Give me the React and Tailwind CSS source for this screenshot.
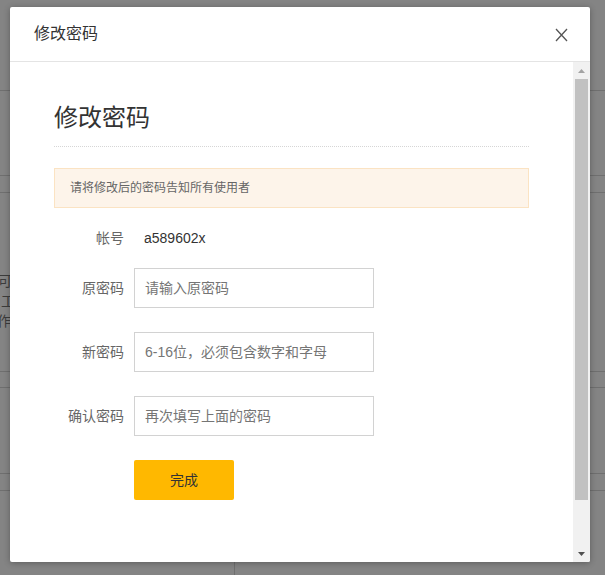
import React from 'react';

const FONT = { fontFamily: '"Liberation Sans", "Noto Sans CJK SC", sans-serif' };

function Field({ label, placeholder }) {
  return (
    <div className="flex items-center h-[40px]">
      <label className="w-[70px] text-right text-[14px] text-[#666]">{label}</label>
      <input
        type="password"
        placeholder={placeholder}
        className="ml-[10px] w-[240px] h-[40px] border border-[#d2d2d2] bg-white px-[10px] text-[14px] text-[#333] outline-none placeholder:text-[#757575]"
      />
    </div>
  );
}

function Scrollbar() {
  return (
    <div className="w-[17px] bg-[#f1f1f1] flex flex-col">
      <div className="h-[17px] flex items-center justify-center">
        <svg width="7" height="4" viewBox="0 0 7 4"><path d="M3.5 0 L7 4 L0 4 Z" fill="#a3a3a3" /></svg>
      </div>
      <div className="flex-1 px-[2px] flex flex-col">
        <div className="h-[421px] bg-[#c1c1c1]" />
      </div>
      <div className="h-[17px] flex items-center justify-center">
        <svg width="7" height="4" viewBox="0 0 7 4"><path d="M0 0 L7 0 L3.5 4 Z" fill="#505050" /></svg>
      </div>
    </div>
  );
}

export default function App() {
  return (
    <div className="relative w-[605px] h-[575px] overflow-hidden bg-[#848484]" style={FONT}>
      {/* page behind the overlay */}
      <div className="flex flex-col w-full">
        <div className="h-[91px] border-b border-[#6f6f6f]" />
        <div className="h-[85px] border-b border-[#6f6f6f]" />
        <div className="h-[17px] border-b border-[#6f6f6f]" />
        <div className="h-[179px] border-b border-[#6f6f6f] flex flex-col pt-[78px] text-[14px] leading-[20px] text-[#3c3c3c]">
          <span className="-ml-[2px]">可</span>
          <span className="ml-[1px]">工</span>
          <span className="-ml-[3px]">作</span>
        </div>
        <div className="h-[16px] border-b border-[#6f6f6f]" />
        <div className="h-[86px] border-b border-[#6f6f6f]" />
        <div className="h-[17px] border-b border-[#6f6f6f]" />
        <div className="h-[84px] flex">
          <div className="w-[235px] border-r border-[#6f6f6f]" />
        </div>
      </div>

      {/* dialog */}
      <div className="absolute left-[10px] top-[7px] w-[580px] h-[555px] bg-white rounded-[2px] shadow-[0_1px_6px_rgba(0,0,0,0.3)] flex flex-col overflow-hidden">
        <div className="h-[55px] shrink-0 border-b border-[#e4e4e4] flex items-center justify-between pl-[24px] pr-[22px]">
          <span className="text-[16px] text-[#333]">修改密码</span>
          <svg width="13" height="14" viewBox="0 0 13 14" className="mt-[1px]">
            <path d="M1 1 L12 13 M12 1 L1 13" stroke="#555" strokeWidth="1.3" fill="none" />
          </svg>
        </div>
        <div className="flex flex-1 min-h-0">
          <div className="flex-1 pl-[44px] pr-[44px] pt-[40px]">
            <h2 className="text-[24px] leading-[32px] text-[#333] pb-[12px] border-b border-dotted border-[#d6d6d6]">修改密码</h2>
            <div className="mt-[21px] h-[40px] border border-[#fbe3c3] bg-[#fdf4ea] flex items-center pl-[15px] text-[12px] text-[#666]">
              请将修改后的密码告知所有使用者
            </div>
            <div className="mt-[10px] flex items-center h-[40px]">
              <span className="w-[70px] text-right text-[14px] text-[#666]">帐号</span>
              <span className="ml-[20px] text-[14px] text-[#333]">a589602x</span>
            </div>
            <div className="mt-[10px] flex flex-col gap-[24px]">
              <Field label="原密码" placeholder="请输入原密码" />
              <Field label="新密码" placeholder="6-16位，必须包含数字和字母" />
              <Field label="确认密码" placeholder="再次填写上面的密码" />
            </div>
            <div className="mt-[24px] pl-[80px]">
              <button className="w-[100px] h-[40px] rounded-[2px] bg-[#ffb800] text-[14px] text-[#333]">完成</button>
            </div>
          </div>
          <Scrollbar />
        </div>
      </div>
    </div>
  );
}
